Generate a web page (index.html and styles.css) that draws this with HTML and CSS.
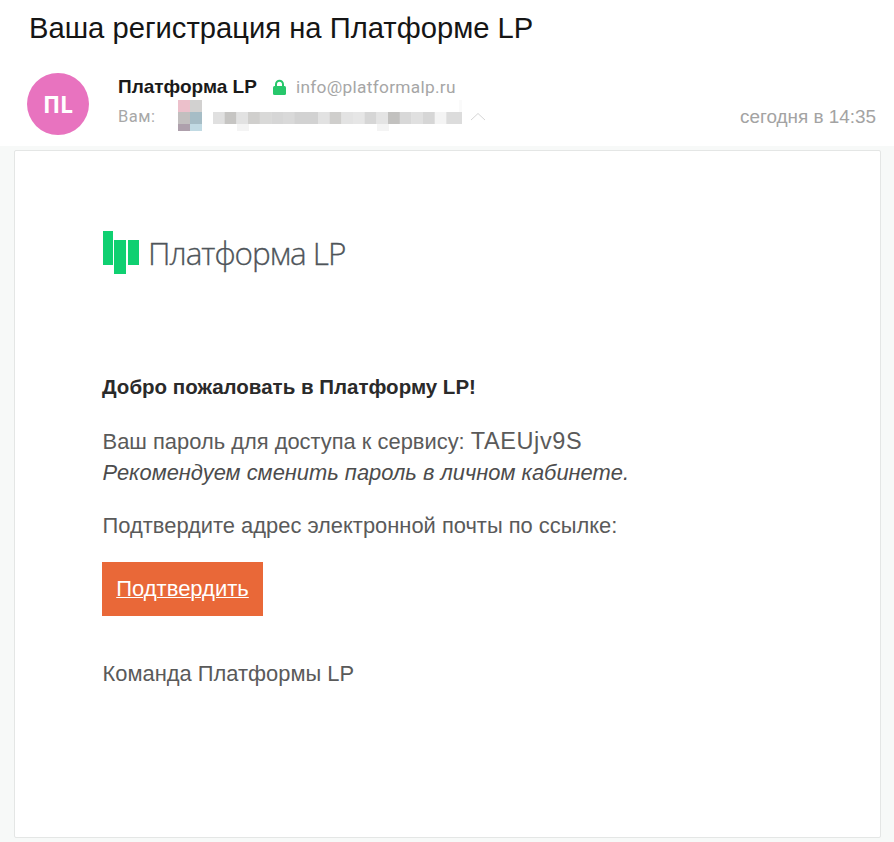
FILE: index.html
```html
<!DOCTYPE html>
<html lang="ru">
<head>
<meta charset="utf-8">
<title>Ваша регистрация на Платформе LP</title>
<link rel="stylesheet" href="styles.css">
</head>
<body>
<header class="head">
  <h1 class="subject">Ваша регистрация на Платформе LP</h1>
  <div class="meta">
    <div class="avatar">ПL</div>
    <div class="who">
      <div class="from">
        <span class="name">Платформа LP</span>
        <svg class="lock" width="15" height="17" viewBox="0 0 15 17"><path d="M4 8V5.200a3.500 3.500 0 0 1 7 0V8" fill="none" stroke="#27c76b" stroke-width="2"/><rect x="1" y="7" width="13" height="9" rx="1.500" fill="#27c76b"/></svg>
        <span class="addr">info@platformalp.ru</span>
      </div>
      <div class="to">
        <span class="to-label">Вам:</span>
        <svg class="blur" width="288" height="32" viewBox="0 0 288 32">
          <rect x="0" y="0" width="12" height="12" fill="#ecc0cb"/><rect x="12" y="0" width="12" height="12" fill="#d2d1d0"/>
          <rect x="0" y="12" width="12" height="12" fill="#c2bfbf"/><rect x="12" y="12" width="12" height="12" fill="#a6bdc6"/>
          <rect x="0" y="24" width="12" height="7" fill="#aea0ac"/><rect x="12" y="24" width="12" height="7" fill="#c1dae3"/>
          <rect x="35" y="12" width="12" height="12" fill="#e0e0e0"/><rect x="46.700" y="12" width="12" height="12" fill="#c6c5c3"/>
          <rect x="58.300" y="12" width="12" height="12" fill="#e2e2e2"/><rect x="70" y="12" width="12" height="12" fill="#d0cfcd"/>
          <rect x="81.700" y="12" width="12" height="12" fill="#d9d9d8"/><rect x="93.300" y="12" width="12" height="12" fill="#d6d6d6"/>
          <rect x="105" y="12" width="12" height="12" fill="#d9d9d9"/><rect x="116.700" y="12" width="24" height="12" fill="#d2d2d2"/>
          <rect x="140" y="12" width="12" height="12" fill="#e2e2e2"/><rect x="151.700" y="12" width="12" height="12" fill="#cfcecc"/>
          <rect x="163.300" y="12" width="12" height="12" fill="#e3e3e3"/><rect x="175" y="12" width="12" height="12" fill="#e6e6e6"/>
          <rect x="186.700" y="12" width="12" height="12" fill="#d6d6d6"/><rect x="198.300" y="12" width="12" height="12" fill="#e4e4e4"/>
          <rect x="210" y="12" width="12" height="12" fill="#c2c1bf"/><rect x="221.700" y="12" width="12" height="12" fill="#d8d8d8"/>
          <rect x="233.300" y="12" width="12" height="12" fill="#e0e0e0"/><rect x="245" y="12" width="12" height="12" fill="#d6d6d6"/>
          <rect x="256.700" y="12" width="12" height="12" fill="#f4f4f4"/><rect x="268.300" y="12" width="15.700" height="12" fill="#dcdcdc"/>
          <rect x="59" y="24" width="12" height="7" fill="#f4f4f4"/><rect x="199" y="24" width="12" height="7" fill="#f4f4f4"/>
          <rect x="281" y="0" width="3" height="12" fill="#fafafa"/>
        </svg>
        <svg class="chev" width="16" height="9" viewBox="0 0 16 9"><path d="M1 8l7-6.500 7 6.500" fill="none" stroke="#d6d6d6" stroke-width="1"/></svg>
        <span class="date">сегодня в 14:35</span>
      </div>
    </div>
  </div>
</header>
<main class="outer">
  <article class="card">
    <div class="logo">
      <svg width="37" height="44" viewBox="0 0 37 44"><rect x="1" y="0" width="10" height="34" fill="#0fd071"/><rect x="12" y="9" width="12" height="34" fill="#0fd071"/><rect x="26" y="9" width="11" height="25" fill="#0fd071"/></svg>
      <span class="logo-text">Платформа LP</span>
    </div>
    <p class="welcome">Добро пожаловать в Платформу LP!</p>
    <p class="para">Ваш пароль для доступа к сервису: <span class="pass">TAEUjv9S</span><br><em>Рекомендуем сменить пароль в личном кабинете.</em></p>
    <p class="para">Подтвердите адрес электронной почты по ссылке:</p>
    <a class="btn" href="#">Подтвердить</a>
    <p class="para sign">Команда Платформы LP</p>
  </article>
</main>
</body>
</html>
```
FILE: styles.css
```css
* { box-sizing: border-box; }
html, body { margin: 0; height: 842px; overflow: hidden; }
body { background: #fff; font-family: "Liberation Sans", Arial, sans-serif; color: #111; }
.head { height: 146px; padding: 12px 18px 0 27px; }
.subject { margin: 0 0 0 2px; font-size: 29.200px; line-height: 32px; font-weight: 400; color: #151515; }
.meta { display: flex; margin-top: 29px; gap: 29px; }
.avatar { width: 62px; height: 62px; flex: none; border-radius: 50%; background: #e873bf; color: #fff; font: 700 23px/62px "Open Sans", sans-serif; text-align: center; }
.who { flex: 1; min-width: 0; }
.from { display: flex; align-items: center; height: 28px; }
.name { font-size: 19px; font-weight: 700; color: #1a1a1a; }
.lock { margin-left: 15px; }
.addr { margin-left: 9px; font: 400 17.300px Roboto, sans-serif; color: #a6a6a6; letter-spacing: .3px; }
.to { display: flex; align-items: flex-start; height: 32px; margin-top: -1px; }
.to-label { font: 400 16.500px/34px Roboto, sans-serif; color: #a8a8a8; width: 60px; letter-spacing: .5px; }
.chev { margin: 12px 0 0 4px; }
.date { margin: 1px 0 0 auto; font: 400 18.900px/32px "Liberation Sans", sans-serif; color: #a3a3a3; }
.outer { height: 696px; background: #f7f9f8; padding: 4px 13px 4px 14px; }
.card { height: 688px; background: #fff; border: 1px solid #e4e6e5; border-radius: 2px; padding: 80px 87px 0; }
.logo { display: flex; align-items: flex-start; height: 44px; gap: 9px; }
.logo-text { font: 300 31.500px/43px "Open Sans", sans-serif; color: #4f555a; letter-spacing: -1px; -webkit-text-stroke: .3px #4f555a; }
.welcome { margin: 100px 0 0; font-size: 20.500px; line-height: 24px; font-weight: 700; color: #2a2a2a; }
.para { margin: 0 0 0 .6px; font-size: 21.900px; line-height: 31px; color: #5a5a5a; }
.welcome + .para { margin-top: 27px; }
.para em { color: #4c4c4c; }
.para + .para { margin-top: 22px; }
.pass { font-size: 23.500px; line-height: 1; letter-spacing: .6px; }
.btn { display: block; width: 161px; height: 54px; margin-top: 21px; background: #e96838; color: #fff; font-size: 22px; line-height: 54px; text-align: center; text-decoration-thickness: 1px; }
.sign { margin-top: 42px; }
```
